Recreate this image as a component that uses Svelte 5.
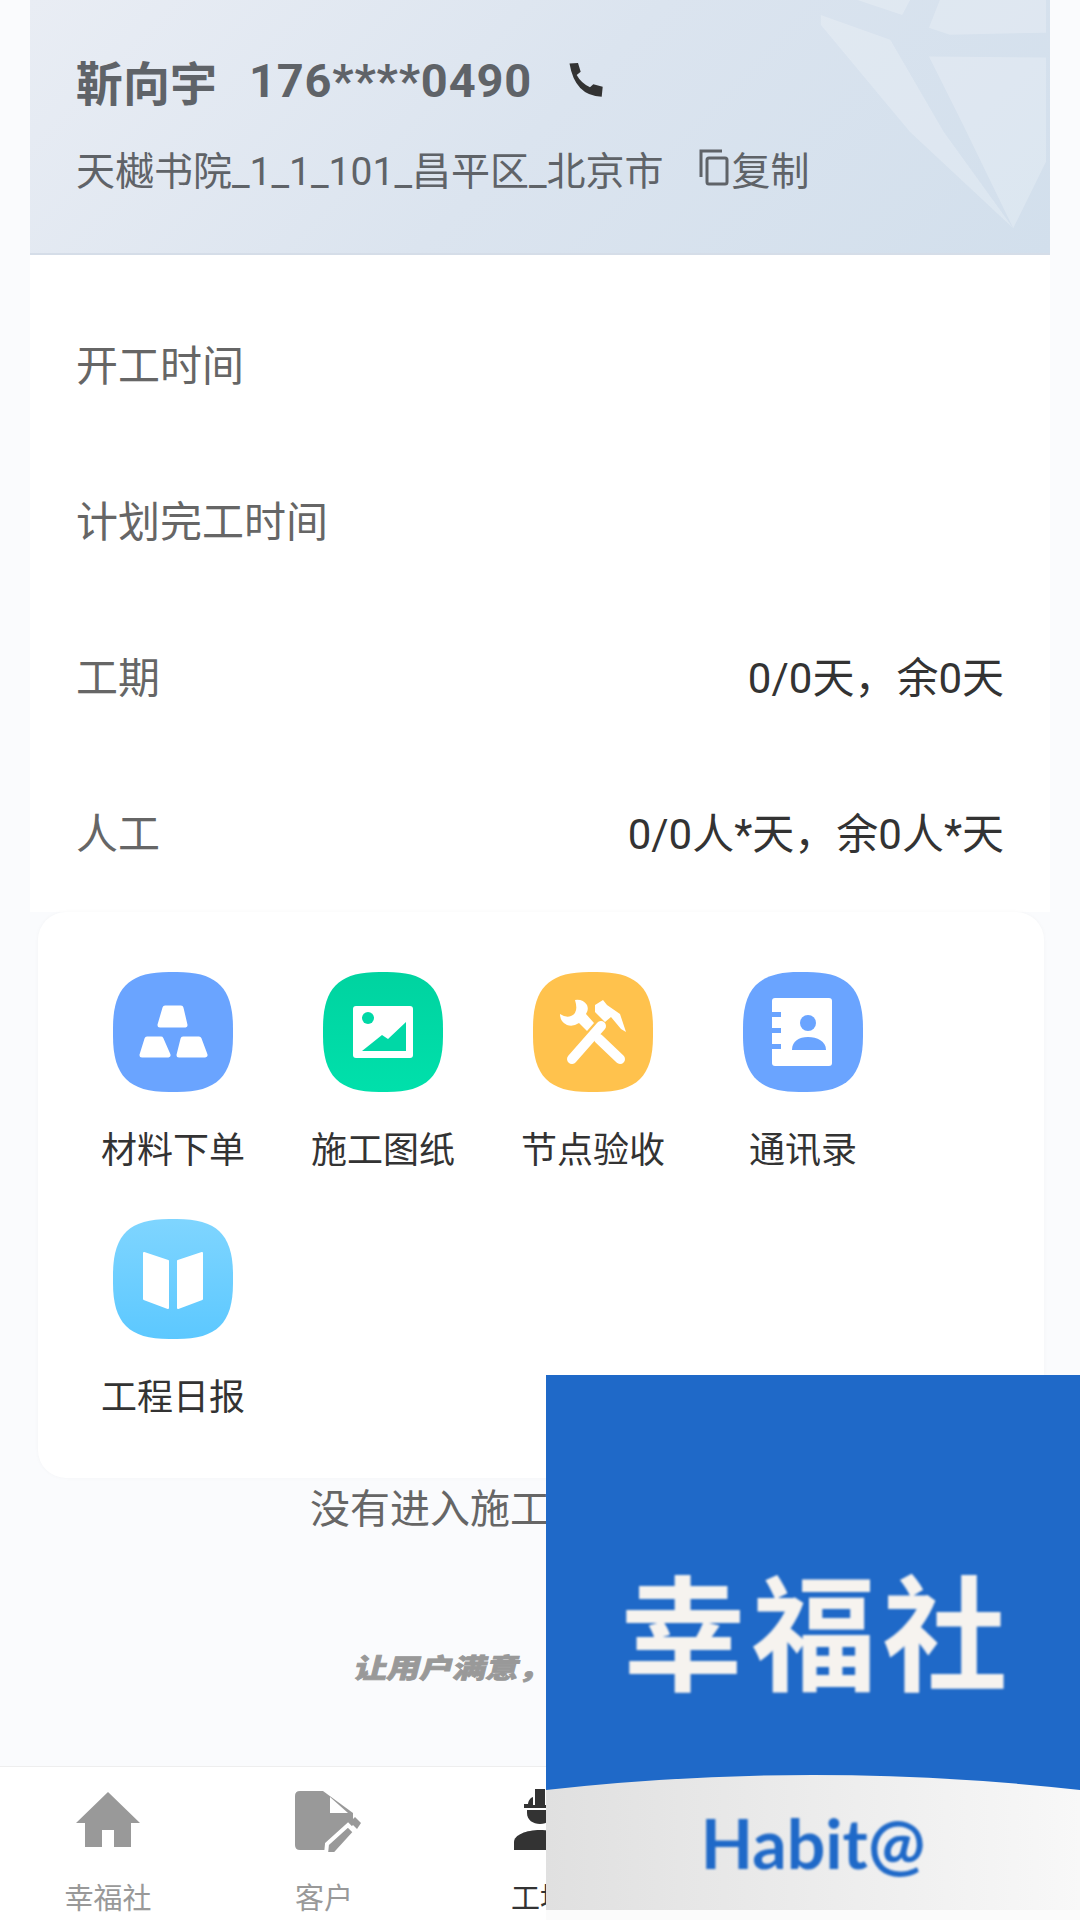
<script lang="ts">
	const rows = [
		{ label: '开工时间', value: '' },
		{ label: '计划完工时间', value: '' },
		{ label: '工期', value: '0/0天，余0天' },
		{ label: '人工', value: '0/0人*天，余0人*天' }
	];

	const tabs = [
		{ id: 'home', label: '幸福社' },
		{ id: 'customer', label: '客户' },
		{ id: 'site', label: '工地', active: true },
		{ id: 'a', label: '' },
		{ id: 'b', label: '' }
	];

	// rounded square shared by the tool tiles
	const squircle = 'M56 0H64C104 0 120 16 120 56V64C120 104 104 120 64 120H56C16 120 0 104 0 64V56C0 16 16 0 56 0Z';
</script>

<div class="page">
	<main class="main">
		<header class="head">
			<svg class="plane" viewBox="0 0 1020 255" aria-hidden="true">
				<path d="M793 15 863 40 917 133 987 230 883 133 793 25Z" />
				<path d="M902 57 1020 58V163L987 230 937 127Z" />
				<path d="M830 0 875 15 883 0Z" />
				<path d="M902 28 913 0H1020V33L923 35Z" />
			</svg>
			<div class="who">
				<span class="name">靳向宇</span>
				<span class="phone">176****0490</span>
				<svg class="call" viewBox="0 0 36 36" aria-hidden="true">
					<path d="M1.500 1.500 10 1 12.700 9.700 8.700 13Q13 21 22 25.300L25.300 22.300 34.700 24.700 33.700 34.700Q7 34 1.500 1.500Z" />
				</svg>
			</div>
			<div class="addr">
				<span>天樾书院_1_1_101_昌平区_北京市</span>
				<span class="copy">
					<svg viewBox="0 0 32 38" aria-hidden="true">
						<path d="M24 2H3v26" />
						<rect x="9" y="9" width="20" height="26" rx="2" />
					</svg>复制
				</span>
			</div>
		</header>

		<section class="info">
			{#each rows as row}
				<div class="row">
					<span class="row-label">{row.label}</span>
					<span class="row-value">{row.value}</span>
				</div>
			{/each}
		</section>

		<section class="panel">
			<div class="cell">
				<svg class="tile" viewBox="0 0 120 120" aria-hidden="true">
					<path d={squircle} fill="#6aa4ff" />
					<g fill="#fff" stroke="#fff" stroke-width="5" stroke-linejoin="round">
						<path d="M52 36H68L72 53H47Z" />
						<path d="M34 67H48L55 83H29Z" />
						<path d="M70 67H86L92 83H66Z" />
					</g>
				</svg>
				<span class="cell-label">材料下单</span>
			</div>
			<div class="cell">
				<svg class="tile" viewBox="0 0 120 120" aria-hidden="true">
					<defs>
						<linearGradient id="green" x1="0" y1="0" x2="0" y2="1">
							<stop offset="0" stop-color="#00d3a0" />
							<stop offset="1" stop-color="#00e0ab" />
						</linearGradient>
					</defs>
					<path d={squircle} fill="url(#green)" />
					<rect x="30" y="34" width="60" height="52" rx="3" fill="#fff" />
					<circle cx="45" cy="46" r="6" fill="#00d8a6" />
					<path d="M39 79 59 63 65 67 83 50V79Z" fill="#00d8a6" />
				</svg>
				<span class="cell-label">施工图纸</span>
			</div>
			<div class="cell">
				<svg class="tile" viewBox="0 0 120 120" aria-hidden="true">
					<path d={squircle} fill="#ffc24d" />
					<g fill="#fff">
						<path d="M42 28Q50 27 54 33 56 38 53 42L61 51 54 59 46 51Q40 55 34 53 27 50 27 42 33 46 38 44 46 41 42 28Z" />
						<path d="M62 33 70 28 74 33 87 42 93 60 88 57 78 45 72 50 62 40Z" />
					</g>
					<g stroke="#fff" stroke-width="10" stroke-linecap="round">
						<path d="M39 87 68 54" />
						<path d="M66 67 87 87" />
					</g>
				</svg>
				<span class="cell-label">节点验收</span>
			</div>
			<div class="cell">
				<svg class="tile" viewBox="0 0 120 120" aria-hidden="true">
					<path d={squircle} fill="#6aa4ff" />
					<rect x="29" y="26" width="60" height="68" rx="3" fill="#fff" />
					<g fill="#6aa4ff">
						<rect x="29" y="40" width="9" height="5" />
						<rect x="29" y="56" width="9" height="5" />
						<rect x="29" y="72" width="9" height="5" />
						<ellipse cx="65" cy="51" rx="8" ry="8" />
						<path d="M49 78C49 69 56 65 65 65S83 69 83 78Z" />
					</g>
				</svg>
				<span class="cell-label">通讯录</span>
			</div>
			<div class="cell">
				<svg class="tile" viewBox="0 0 120 120" aria-hidden="true">
					<defs>
						<linearGradient id="sky" x1="0" y1="0" x2="0" y2="1">
							<stop offset="0" stop-color="#7fd5ff" />
							<stop offset="1" stop-color="#5cc8ff" />
						</linearGradient>
					</defs>
					<path d={squircle} fill="url(#sky)" />
					<g fill="#fff" stroke="#fff" stroke-width="2" stroke-linejoin="round">
						<path d="M31 34 55 42V89L31 80Z" />
						<path d="M89 34 65 42V89L89 80Z" />
					</g>
				</svg>
				<span class="cell-label">工程日报</span>
			</div>
		</section>

		<p class="notice">没有进入施工</p>
		<p class="slogan"><span>让用户满意，</span></p>
	</main>

	<nav class="tabs">
		{#each tabs as tab}
			<div class="tab" class:active={tab.active}>
				{#if tab.id === 'home'}
					<svg class="tab-icon" viewBox="0 0 64 64" aria-hidden="true">
						<path fill="#999" d="M32 3 64 34H55V58H38V41H26V58H9V34H0Z" />
					</svg>
				{:else if tab.id === 'customer'}
					<svg class="tab-icon" viewBox="0 0 64 64" aria-hidden="true">
						<path fill="#999" d="M8 2H31L61 24V36L36 61H8Q3 61 3 56V7Q3 2 8 2Z" />
						<path fill="#fff" d="M38 8 56 24H38Z" />
						<path fill="#999" stroke="#fff" stroke-width="4" d="M34 65 35 55 56 36 63 43 43 65Z" />
						<path fill="#999" d="M58 33 63 28 69 34 65 40Z" />
					</svg>
				{:else if tab.id === 'site'}
					<svg class="tab-icon" viewBox="0 0 64 64" aria-hidden="true">
						<path fill="#333" d="M20 16C20 12 22 9 25 8V16H27V0H37V16H39V8C42 9 44 12 44 16V15H48V19H16V15H20Z" />
						<path fill="#333" d="M19 21H45V24C45 31 39 35 32 35S19 31 19 24Z" />
						<path fill="#333" d="M6 61V53C6 46 18 41 32 41S58 46 58 53V61Z" />
					</svg>
				{:else}
					<div class="tab-icon"></div>
				{/if}
				<span>{tab.label}</span>
			</div>
		{/each}
	</nav>

	<aside class="logo">
		<div class="logo-title">幸福社</div>
		<div class="logo-foot">
			<svg viewBox="0 0 534 145" preserveAspectRatio="none" aria-hidden="true">
				<defs>
					<linearGradient id="foot" x1="0" y1="0" x2="1" y2="0">
						<stop offset="0" stop-color="#e0e0e0" />
						<stop offset="1" stop-color="#f8f8f8" />
					</linearGradient>
				</defs>
				<path d="M0 15Q267 -15 534 15V145H0Z" fill="url(#foot)" />
				<rect y="135" width="534" height="10" fill="#fbfbfb" />
			</svg>
			<span class="logo-en">Habit@</span>
		</div>
	</aside>
</div>

<style>
	:global(body) {
		margin: 0;
		background: #fafbfd;
	}

	.page {
		position: relative;
		width: 1080px;
		height: 1920px;
		overflow: hidden;
		display: flex;
		flex-direction: column;
		font-family: Roboto, 'Noto Sans CJK SC', sans-serif;
		background: #fafbfd;
	}

	.main {
		flex: 1;
	}

	.head {
		position: relative;
		box-sizing: border-box;
		height: 255px;
		margin: 0 30px;
		padding: 49px 46px 0;
		background: linear-gradient(135deg, #e9edf4 0%, #dbe4ef 50%, #d2dfec 100%);
		border-bottom: 2px solid #d5dde8;
		color: #5f6368;
	}

	.plane {
		position: absolute;
		inset: 0;
		width: 100%;
		height: 100%;
		fill: #fff;
		fill-opacity: 0.22;
	}

	.who,
	.addr {
		position: relative;
		display: flex;
		align-items: center;
	}

	.who {
		height: 62px;
		font-size: 47px;
		font-weight: 700;
	}

	.phone {
		margin-left: 32px;
		letter-spacing: 0.8px;
	}

	.call {
		width: 36px;
		height: 36px;
		margin-left: 36px;
		fill: #333;
	}

	.addr {
		margin-top: 32px;
		height: 50px;
		font-size: 39px;
	}

	.copy {
		display: flex;
		align-items: center;
		margin-left: 32px;
	}

	.copy svg {
		width: 36px;
		height: 38px;
		fill: none;
		stroke: #5f6368;
		stroke-width: 3;
	}

	.info {
		box-sizing: border-box;
		height: 657px;
		margin: 0 30px;
		padding: 29px 46px 0;
		background: #fff;
	}

	.row {
		height: 156px;
		display: flex;
		align-items: center;
		justify-content: space-between;
		font-size: 42px;
	}

	.row-label {
		color: #666;
	}

	.row-value {
		color: #333;
	}

	.panel {
		box-sizing: border-box;
		height: 566px;
		margin: 0 36px 0 38px;
		padding: 60px 0 0 30px;
		display: grid;
		grid-template-columns: repeat(4, 210px);
		grid-auto-rows: 201px;
		row-gap: 46px;
		background: #fff;
		border-radius: 28px;
		box-shadow: 0 0 4px rgba(0, 0, 0, 0.03);
	}

	.cell {
		display: flex;
		flex-direction: column;
		align-items: center;
	}

	.tile {
		width: 120px;
		height: 120px;
		flex: none;
	}

	.cell-label {
		margin-top: 34px;
		font-size: 36px;
		line-height: 50px;
		color: #333;
	}

	.notice {
		margin: 0;
		padding-left: 310px;
		padding-top: 3px;
		font-size: 40px;
		line-height: 58px;
		color: #666;
	}

	.slogan {
		margin: 110px 0 0;
		padding-left: 355px;
		font-size: 33px;
		line-height: 40px;
		font-weight: 900;
		color: #999;
	}

	.slogan span {
		display: inline-block;
		transform: skewX(-14deg) scaleY(0.82);
		-webkit-text-stroke: 1px #999;
	}

	.tabs {
		height: 154px;
		display: grid;
		grid-template-columns: repeat(5, 216px);
		background: #fff;
		border-top: 1px solid #eee;
		box-sizing: border-box;
	}

	.tab {
		display: flex;
		flex-direction: column;
		align-items: center;
		padding-top: 22px;
		font-size: 29px;
		color: #999;
	}

	.tab.active {
		color: #333;
	}

	.tab-icon {
		width: 64px;
		height: 64px;
		margin-bottom: 22px;
		overflow: visible;
	}

	.logo {
		position: absolute;
		right: 0;
		bottom: 0;
		width: 534px;
		height: 545px;
		display: flex;
		flex-direction: column;
		background: #1f69c8;
	}

	.logo-title {
		margin-top: 172px;
		padding-left: 8px;
		text-align: center;
		font-family: 'Noto Sans CJK SC', sans-serif;
		font-size: 125px;
		line-height: 160px;
		font-weight: 700;
		letter-spacing: 6px;
		color: #f6f3ef;
		filter: blur(0.8px);
	}

	.logo-foot {
		position: absolute;
		left: 0;
		right: 0;
		bottom: 0;
		height: 145px;
		display: flex;
		justify-content: center;
	}

	.logo-foot svg {
		position: absolute;
		inset: 0;
		width: 100%;
		height: 100%;
	}

	.logo-en {
		position: relative;
		margin-top: 28px;
		font-family: Lato, sans-serif;
		font-size: 68px;
		line-height: 80px;
		font-weight: 700;
		color: #1f69c8;
		filter: blur(0.8px);
	}
</style>
